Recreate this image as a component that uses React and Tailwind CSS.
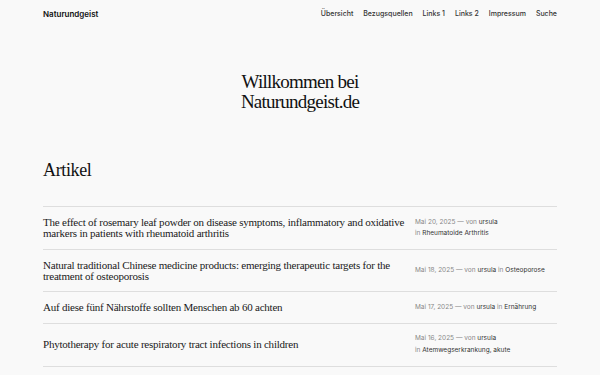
import React from "react";

const serif = { fontFamily: '"Liberation Serif", "Times New Roman", serif' };

const rows = [
  {
    title: ["The effect of rosemary leaf powder on disease symptoms, inflammatory and oxidative", "markers in patients with rheumatoid arthritis"],
    date: "Mai 20, 2025",
    cats: "Rheumatoide Arthritis",
    split: true,
  },
  {
    title: ["Natural traditional Chinese medicine products: emerging therapeutic targets for the", "treatment of osteoporosis"],
    date: "Mai 18, 2025",
    cats: "Osteoporose",
    split: false,
  },
  {
    title: ["Auf diese fünf Nährstoffe sollten Menschen ab 60 achten"],
    date: "Mai 17, 2025",
    cats: "Ernährung",
    split: false,
  },
  {
    title: ["Phytotherapy for acute respiratory tract infections in children"],
    date: "Mai 16, 2025",
    cats: "Atemwegserkrankung, akute",
    split: true,
  },
];

export default function App() {
  return (
    <div className="min-h-[375px] w-full bg-[#f9f9f9] text-[#111]" style={{ fontFamily: 'Inter, "Liberation Sans", sans-serif' }}>
      <div className="px-[43px]">
        <header className="flex h-[28px] items-center justify-between">
          <div className="text-[8px] font-semibold text-[#111]">Naturundgeist</div>
          <nav className="flex gap-[10px] text-[7px] font-medium text-[#333]">
            <span>Übersicht</span>
            <span>Bezugsquellen</span>
            <span>Links 1</span>
            <span>Links 2</span>
            <span>Impressum</span>
            <span>Suche</span>
          </nav>
        </header>

        <h1 className="mt-[44px] text-center text-[19px] leading-[20px] tracking-[-0.04em] text-[#111]" style={serif}>
          Willkommen bei
          <br />
          Naturundgeist.de
        </h1>

        <h2 className="mt-[47px] text-[18px] leading-[22px] tracking-[-0.02em] text-[#111]" style={serif}>
          Artikel
        </h2>

        <div className="mt-[25px] border-b border-[#dedede]">
          {rows.map((r, i) => (
            <div key={i} className="flex items-center gap-[10px] border-t border-[#dedede] py-[9.5px]">
              <div className="w-[362px] text-[11px] leading-[11px] tracking-[-0.02em] text-[#1a1a1a]" style={serif}>
                {r.title.map((t, j) => (
                  <span key={j} className="block whitespace-nowrap">{t}</span>
                ))}
              </div>
              <div className="flex-1 text-[6.5px] leading-[11.5px] text-[#888]">
                {r.split ? (
                  <>
                    <div>
                      {r.date} — von <span className="text-[#333]">ursula</span>
                    </div>
                    <div>
                      in <span className="text-[#333]">{r.cats}</span>
                    </div>
                  </>
                ) : (
                  <div>
                    {r.date} — von <span className="text-[#333]">ursula</span> in <span className="text-[#333]">{r.cats}</span>
                  </div>
                )}
              </div>
            </div>
          ))}
        </div>
      </div>
    </div>
  );
}
